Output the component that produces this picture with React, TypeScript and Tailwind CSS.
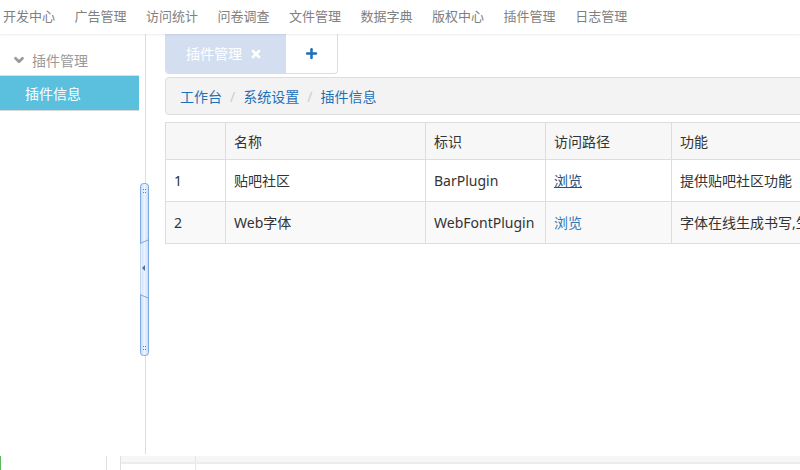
import { ChevronDown, Plus, X } from "lucide-react";

const navItems = ["开发中心", "广告管理", "访问统计", "问卷调查", "文件管理", "数据字典", "版权中心", "插件管理", "日志管理"];

const rows = [
  { id: "1", name: "贴吧社区", key: "BarPlugin", desc: "提供贴吧社区功能", hover: true },
  { id: "2", name: "Web字体", key: "WebFontPlugin", desc: "字体在线生成书写,生成艺术字体", hover: false },
];

function Splitter() {
  return (
    <svg className="absolute left-[140px] top-[183px]" width="10" height="173" viewBox="0 0 10 173">
      <defs>
        <linearGradient id="sp" x1="0" x2="1" y1="0" y2="0">
          <stop offset="0" stopColor="#c4dcfa" />
          <stop offset="0.5" stopColor="#eaf3fe" />
          <stop offset="1" stopColor="#c4dcfa" />
        </linearGradient>
      </defs>
      <rect x="0.5" y="0.5" width="8" height="172" rx="3" fill="url(#sp)" stroke="#7fa8de" />
      <path d="M1 60 L8 57 M1 112 L8 115" stroke="#7fa8de" fill="none" />
      <path d="M1 61 L1 111" stroke="#ffffff" />
      <path d="M5 82 L2 85 L5 88 Z" fill="#4f6f9c" />
      {[6, 9, 163, 166].map((y) => (
        <g key={y}>
          <rect x="3" y={y} width="1" height="1" fill="#5d7fb0" />
          <rect x="5" y={y} width="1" height="1" fill="#5d7fb0" />
        </g>
      ))}
    </svg>
  );
}

export default function App() {
  return (
    <div
      className="relative w-[800px] h-[470px] overflow-hidden bg-white text-[#333]"
      style={{ fontFamily: '"Noto Sans", "Noto Sans CJK SC", sans-serif' }}
    >
      {/* top nav */}
      <div className="h-[34px] flex items-center pl-[3px] gap-[19.5px] text-[13px] text-[#808080] shadow-[0_1px_2px_rgba(0,0,0,0.08)] relative z-10">
        {navItems.map((n) => (
          <span key={n} className="whitespace-nowrap">{n}</span>
        ))}
      </div>

      <div className="flex h-[422px]">
        {/* sidebar */}
        <div className="w-[139px] shrink-0 pt-[11px]">
          <div className="flex items-center h-[31px] border-b border-[#ddd] pl-[12px] gap-[6px] text-[14px] text-[#999]">
            <ChevronDown size={14} strokeWidth={4.5} className="text-[#999]" />
            <span>插件管理</span>
          </div>
          <div className="h-[35px] flex items-center pl-[25px] bg-[#5bc0de] text-white text-[14px] border-b border-[#d8d8d8]">
            插件信息
          </div>
        </div>
        <div className="w-[7px] shrink-0 border-r border-[#ddd] h-[420px]" />

        {/* main */}
        <div className="flex-1 pl-[19px] overflow-hidden">
          <div className="flex w-[173px] h-[40px] border border-t-0 border-[#ddd] rounded-b-[4px] overflow-hidden">
            <div className="w-[120px] bg-[#d3dff0] flex items-center pl-[20px] gap-[8px] text-white text-[14px]">
              插件管理
              <X size={12} strokeWidth={5} />
            </div>
            <div className="flex-1 flex items-center justify-center text-[#1a6fb8]">
              <Plus size={15} strokeWidth={4} />
            </div>
          </div>

          <div className="mt-[3px] w-[700px] h-[38px] bg-[#f3f3f3] border border-[#ddd] rounded-[4px] flex items-center pl-[14px] text-[14px]">
            <span className="text-[#1e70b8]">工作台</span>
            <span className="px-[8px] text-[#ccc]">/</span>
            <span className="text-[#1e70b8]">系统设置</span>
            <span className="px-[8px] text-[#ccc]">/</span>
            <span className="text-[#1e70b8]">插件信息</span>
          </div>

          <table className="mt-[7px] w-[800px] border-collapse text-[14px] text-[#333] table-fixed">
            <colgroup>
              <col className="w-[60px]" />
              <col className="w-[200px]" />
              <col className="w-[120px]" />
              <col className="w-[126px]" />
              <col className="w-[294px]" />
            </colgroup>
            <thead>
              <tr className="h-[37px] bg-[#f7f7f7]">
                {["", "名称", "标识", "访问路径", "功能"].map((h, i) => (
                  <th key={i} className="border border-[#ddd] px-[8px] text-left font-normal">{h}</th>
                ))}
              </tr>
            </thead>
            <tbody>
              {rows.map((r, i) => (
                <tr key={r.id} className={i % 2 ? "h-[42px] bg-[#f9f9f9]" : "h-[42px] bg-white"}>
                  <td className="border border-[#ddd] px-[8px]">{r.id}</td>
                  <td className="border border-[#ddd] px-[8px]">{r.name}</td>
                  <td className="border border-[#ddd] px-[8px]">{r.key}</td>
                  <td className="border border-[#ddd] px-[8px]">
                    <a className={r.hover ? "text-[#23527c] underline" : "text-[#337ab7]"}>浏览</a>
                  </td>
                  <td className="border border-[#ddd] px-[8px] whitespace-nowrap overflow-hidden">{r.desc}</td>
                </tr>
              ))}
            </tbody>
          </table>
        </div>
      </div>

      {/* footer strip */}
      <div className="flex h-[14px]">
        <div className="w-[107px] border-l border-[#5cb85c] border-r border-r-[#e0e0e0]" />
        <div className="w-[14px] border-r border-[#e0e0e0]" />
        <div className="flex-1 flex flex-col">
          <div className="flex h-[8px] bg-[#f6f6f6] border-b-2 border-[#ececec]">
            <div className="w-[75px] border-r border-[#e6e6e6]" />
          </div>
          <div className="flex flex-1">
            <div className="w-[75px] border-r border-[#e6e6e6]" />
          </div>
        </div>
      </div>

      <Splitter />
    </div>
  );
}
